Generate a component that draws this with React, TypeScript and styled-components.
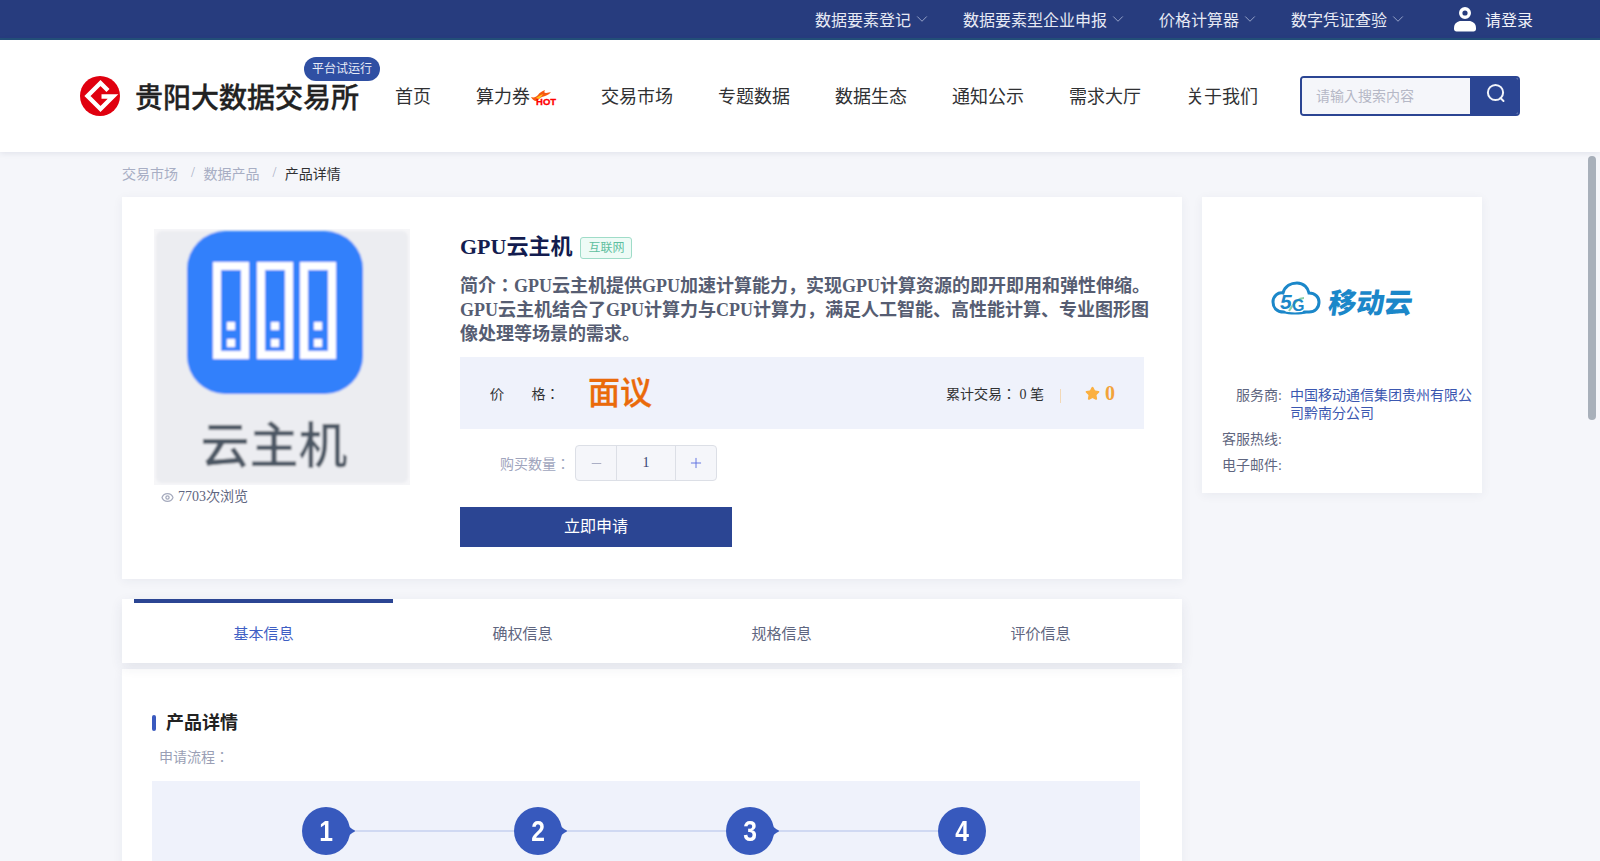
import React from "react";
import styled, { createGlobalStyle } from "styled-components";
import { ChevronDown, Eye, Star, Minus, Plus } from "lucide-react";

const FONT = `"Liberation Serif", "Noto Sans CJK JP", serif`;

const Global = createGlobalStyle`
  html, body, #root { margin: 0; padding: 0; height: 100%; overflow: hidden; }
  body { font-family: ${FONT}; color: #303133; }
  * { box-sizing: border-box; }
`;

const Page = styled.div`
  height: 861px;
  display: flex;
  flex-direction: column;
  background: #f5f6fa;
`;

const TopBar = styled.div`
  height: 40px;
  flex: none;
  background: #273c7e;
  border-bottom: 2px solid #24507a;
  display: flex;
  align-items: center;
  justify-content: flex-end;
  padding: 0 67px 1px 0;
  color: #e6e9f4;
  font-size: 16px;
`;

const TopItem = styled.div`
  display: flex;
  align-items: center;
  gap: 2px;
  margin-right: 32px;
  svg { color: #a3aed0; }
`;

const Login = styled.div`
  display: flex;
  align-items: center;
  gap: 8px;
  margin-left: 14px;
  color: #f0f2f9;
`;

const Header = styled.header`
  height: 112px;
  flex: none;
  background: #fff;
  display: flex;
  align-items: center;
  padding-left: 80px;
  box-shadow: 0 1px 6px rgba(30, 40, 90, 0.1);
  position: relative;
  z-index: 2;
`;

const Brand = styled.div`
  position: relative;
  display: flex;
  align-items: center;
  gap: 15px;
  margin-right: 36px;
`;

const BrandName = styled.div`
  font-size: 28px;
  font-weight: 500;
  -webkit-text-stroke: 0.3px #222;
  color: #222;
  white-space: nowrap;
`;

const TrialBadge = styled.span`
  position: absolute;
  left: 224px;
  top: -19px;
  width: 76px;
  height: 24px;
  border-radius: 12px;
  background: #2f4fa3;
  color: #e8ecf7;
  font-size: 12px;
  line-height: 24px;
  text-align: center;
`;

const Nav = styled.nav`
  display: flex;
  align-items: center;
  gap: 45px;
  margin-top: -3px;
  font-size: 18px;
  color: #303133;
`;

const NavItem = styled.span`
  display: flex;
  align-items: center;
  white-space: nowrap;
`;

const Hot = styled.span`
  position: relative;
  display: inline-block;
  width: 26px;
  height: 20px;
`;

const HotLabel = styled.span`
  position: absolute;
  left: 6px;
  top: 12px;
  font: 900 9.5px/9px "Liberation Sans", sans-serif;
  -webkit-text-stroke: 0.3px #f00;
  color: #f00;
`;

const FlameWrap = styled.svg`
  position: absolute;
  left: 1px;
  top: 5px;
`;

const Search = styled.div`
  width: 220px;
  height: 40px;
  margin-left: 42px;
  display: flex;
  border: 2px solid #2b4593;
  border-radius: 4px;
  overflow: hidden;
`;

const SearchInput = styled.input`
  flex: 1;
  min-width: 0;
  border: 0;
  outline: 0;
  padding: 1px 14px 0;
  background: #f5f6fa;
  font: 14px ${FONT};
  &::placeholder { color: #b5b8c6; opacity: 1; }
`;

const SearchButton = styled.div`
  width: 48px;
  flex: none;
  background: #2b4593;
  display: flex;
  justify-content: center;
  padding: 4px 0 0 3px;
`;

const ScrollFrame = styled.div`
  position: relative;
  flex: 1;
  min-height: 0;
`;

const Scroll = styled.main`
  height: 100%;
  overflow-y: scroll;
`;

const ScrollThumb = styled.div`
  position: absolute;
  top: 4px;
  right: 4px;
  width: 8px;
  height: 264px;
  border-radius: 4px;
  background: #a8b0ba;
`;

const Crumbs = styled.div`
  height: 41px;
  margin-bottom: 4px;
  padding-left: 122px;
  display: flex;
  align-items: center;
  font-size: 14px;
  color: #a8aec4;
`;

const CrumbSep = styled.span`
  margin: 0 8.5px 0 13px;
  color: #a8aec4;
`;

const CrumbNow = styled.span`
  color: #303133;
`;

const Columns = styled.div`
  display: grid;
  grid-template-columns: 1060px 280px;
  gap: 20px;
  padding-left: 122px;
  align-items: start;
`;

const LeftCol = styled.div`
  display: flex;
  flex-direction: column;
`;

const Card = styled.section`
  background: #fff;
  box-shadow: 0 2px 10px rgba(40, 50, 90, 0.06);
`;

const ProductCard = styled(Card)`
  height: 382px;
  padding: 32px;
  display: flex;
  gap: 50px;
`;

const Gallery = styled.div`
  width: 256px;
  flex: none;
`;

const Views = styled.div`
  display: flex;
  align-items: center;
  gap: 4px;
  padding-left: 7px;
  margin-top: 3px;
  font-size: 14px;
  line-height: 18px;
  color: #5f6680;
  svg { color: #a5aabd; }
`;

const Info = styled.div`
  width: 690px;
  flex: none;
`;

const TitleRow = styled.div`
  display: flex;
  align-items: center;
  gap: 8px;
  height: 30px;
`;

const Title = styled.h1`
  margin: 0;
  font-size: 22px;
  font-weight: 700;
  color: #131c4f;
`;

const Tag = styled.span`
  width: 52px;
  height: 22px;
  margin-top: 8px;
  border: 1px solid #9fdcc8;
  border-radius: 3px;
  background: #eefbf6;
  color: #5fbf9f;
  font-size: 12px;
  line-height: 20px;
  text-align: center;
`;

const Desc = styled.p`
  margin: 15px 0 0;
  font-size: 18px;
  font-weight: 700;
  line-height: 24px;
  color: #565d72;
`;

const PriceBox = styled.div`
  width: 684px;
  height: 72px;
  margin-top: 11px;
  background: #eff2fb;
  display: flex;
  align-items: center;
  padding: 0 29px 0 30px;
  font-size: 14px;
  color: #303133;
`;

const PriceLabel = styled.span`
  width: 98px;
  flex: none;
  word-spacing: 24px;
`;

const PriceValue = styled.span`
  font-size: 32px;
  font-weight: 500;
  margin-bottom: 6px;
  -webkit-text-stroke: 0.3px #ea6a0a;
  color: #ea6a0a;
  margin-right: auto;
`;

const Divider = styled.span`
  width: 1px;
  height: 14px;
  margin: 6px 24px 0 16px;
  background: #f2d8b6;
`;

const Score = styled.span`
  display: flex;
  align-items: center;
  gap: 5px;
  font-size: 20px;
  font-weight: 700;
  color: #f2a33a;
  svg { color: #fbb040; fill: #fbb040; }
`;

const QtyRow = styled.div`
  display: flex;
  align-items: center;
  margin-top: 16px;
  padding-left: 40px;
  gap: 5px;
  font-size: 14px;
  color: #a0a5bd;
`;

const Stepper = styled.div`
  width: 142px;
  height: 36px;
  display: flex;
  border: 1px solid #dcdfe6;
  border-radius: 4px;
  background: #f5f6fa;
`;

const StepBtn = styled.span<{ $accent?: boolean; $side: "l" | "r" }>`
  width: 41px;
  flex: none;
  display: flex;
  align-items: center;
  justify-content: center;
  color: ${(p) => (p.$accent ? "#5b6fe0" : "#a0a5bd")};
  ${(p) => (p.$side === "l" ? "border-right" : "border-left")}: 1px solid #dcdfe6;
`;

const StepValue = styled.span`
  flex: 1;
  text-align: center;
  line-height: 34px;
  color: #3a4470;
  font-size: 14px;
`;

const Apply = styled.button`
  display: block;
  width: 272px;
  height: 40px;
  margin-top: 26px;
  border: 0;
  padding: 0 0 4px;
  background: #2b4593;
  color: #fff;
  font: 16px ${FONT};
`;

const Tabs = styled(Card)`
  height: 64px;
  margin-top: 20px;
  padding: 0 12px;
  display: flex;
  position: relative;
  z-index: 1;
  box-shadow: 0 4px 12px rgba(40, 50, 90, 0.09);
`;

const Tab = styled.div<{ $active?: boolean }>`
  width: 259px;
  border-top: 4px solid ${(p) => (p.$active ? "#2b4593" : "transparent")};
  text-align: center;
  font-size: 15px;
  line-height: 62px;
  color: ${(p) => (p.$active ? "#3f5fc4" : "#5f6680")};
`;

const Detail = styled(Card)`
  margin-top: 6px;
  min-height: 1370px;
  padding: 42px 30px 0;
`;

const SectionTitle = styled.h2`
  margin: 0;
  font-size: 18px;
  font-weight: 700;
  line-height: 24px;
  color: #222;
  padding-left: 14px;
  position: relative;
  &::before {
    content: "";
    position: absolute;
    left: 0;
    top: 4px;
    width: 4px;
    height: 16px;
    border-radius: 2px;
    background: #3a5abf;
  }
`;

const FlowLabel = styled.div`
  margin-top: 14px;
  padding-left: 7px;
  font-size: 14px;
  line-height: 18px;
  color: #9a9fb5;
`;

const FlowBox = styled.div`
  width: 988px;
  height: 260px;
  margin-top: 14px;
  background: #eff2fb;
  padding: 26px 0 0 150px;
  display: flex;
  align-items: flex-start;
`;

const Step = styled.div<{ $last?: boolean }>`
  width: ${(p) => (p.$last ? "48px" : "212px")};
  flex: none;
  display: flex;
  align-items: center;
`;

const StepDot = styled.span`
  position: relative;
  width: 48px;
  height: 48px;
  flex: none;
  border-radius: 50%;
  background: #3759bd;
  color: #fff;
  font: 700 29px/48px "Liberation Sans", sans-serif;
  text-align: center;
`;

const StepDigit = styled.span`
  display: inline-block;
  transform: scaleX(0.85);
`;

const StepTip = styled.svg`
  position: absolute;
  left: 44px;
  top: 13px;
`;

const StepLine = styled.span`
  flex: 1;
  height: 2px;
  background: #d0d9f2;
`;

const Side = styled(Card)`
  padding-bottom: 18px;
`;

const SideLogo = styled.div`
  height: 190px;
  padding-top: 12px;
  display: flex;
  align-items: center;
  justify-content: center;
  gap: 8px;
`;

const SideLogoText = styled.span`
  font: 900 28px/32px "Noto Sans CJK SC", sans-serif;
  color: #1b87c9;
  transform: skewX(-8deg);
  margin-top: 6px;
`;

const SideRows = styled.dl`
  margin: 0;
  display: grid;
  grid-template-columns: 80px 1fr;
  column-gap: 8px;
  row-gap: 8px;
  padding-right: 8px;
  font-size: 14px;
  line-height: 18px;
`;

const SideKey = styled.dt`
  text-align: right;
  color: #5f6680;
`;

const SideVal = styled.dd`
  margin: 0;
  min-height: 18px;
  color: #3b57b0;
`;

const Logo = () => (
  <svg width="40" height="40" viewBox="0 0 40 40">
    <circle cx="20" cy="20" r="20" fill="#e0000f" />
    <path d="M28 14.5 L20.5 7 L7.5 20 L20.5 33 L33 20.5 H21.5" fill="none" stroke="#fff" strokeWidth="4.4" />
  </svg>
);

const Flame = () => (
  <FlameWrap width="20" height="12" viewBox="0 0 20 12">
    <path d="M0 7 C3 8 5 7 7 5 C8 3 11 1 14 0 C13 2 13 3 15 3 C17 3 19 2 20 2 C18 5 14 6 11 7 C8 8 7 11 5 11 C3 11 1 9 0 7 Z" fill="#f7590f" />
    <path d="M5 8 C7 7 9 5 12 4 C11 6 9 8 7 9 Z" fill="#ffc21a" />
  </FlameWrap>
);

const UserIcon = () => (
  <svg width="24" height="26" viewBox="0 0 24 26">
    <circle cx="12" cy="7" r="4.3" fill="none" stroke="#fff" strokeWidth="3.4" />
    <path d="M1 22 C1 17 5 15 8 15 H16 C19 15 23 17 23 22 V23 C23 24.5 22 25.5 20.5 25.5 H3.5 C2 25.5 1 24.5 1 23 Z" fill="#fff" />
  </svg>
);

const SearchIcon = () => (
  <svg width="22" height="22" viewBox="0 0 22 22" fill="none" stroke="#f2f4fa" strokeWidth="2">
    <circle cx="10.5" cy="10.5" r="7.6" />
    <path d="M15.5 16 L18.5 19" strokeLinecap="round" />
  </svg>
);

const ProductImage = () => (
  <svg width="256" height="256" viewBox="0 0 256 256" style={{ display: "block" }}>
    <defs>
      <filter id="soft" x="-5%" y="-5%" width="110%" height="110%">
        <feGaussianBlur stdDeviation="0.9" />
      </filter>
    </defs>
    <rect width="256" height="256" fill="#f6f6f8" />
    <g filter="url(#soft)">
      <rect x="2" y="2" width="252" height="252" rx="6" fill="#ecedf1" />
      <rect x="33" y="2" width="176" height="163" rx="38" fill="#3280fb" />
      {[59, 103, 146].map((x) => (
        <g key={x}>
          <rect x={x + 4} y="37" width="28" height="89" fill="none" stroke="#fff" strokeWidth="8" />
          <rect x={x + 14} y="93" width="8" height="8" fill="#fff" />
          <rect x={x + 14} y="110" width="8" height="8" fill="#fff" />
        </g>
      ))}
      <text x="120" y="234" textAnchor="middle" fontSize="49" fontWeight="500" fontFamily="Noto Sans CJK SC, sans-serif" fill="#4c5663">云主机</text>
    </g>
  </svg>
);

const CloudLogo = () => (
  <svg width="50" height="34" viewBox="0 0 50 34">
    <path d="M13 31 C5 31 2 26 2 21 C2 15 7 11 12 12 C14 5 20 2 26 2 C33 2 37 7 38 12 C44 12 48 16 48 21 C48 27 44 31 38 31 H33" fill="none" stroke="#1b87c9" strokeWidth="3" strokeLinecap="round" />
    <path d="M13 31 C18 33 30 33 35 31" fill="none" stroke="#1b87c9" strokeWidth="2" />
    <path d="M18 30 C24 20 28 17 33 17" fill="none" stroke="#8ccfa6" strokeWidth="2" />
    <text x="9" y="28" fontSize="21" fontWeight="700" fontStyle="italic" fontFamily="Liberation Sans, sans-serif" fill="#1b87c9">5</text>
    <text x="21" y="30" fontSize="16" fontWeight="700" fontFamily="Liberation Sans, sans-serif" fill="#1b87c9">G</text>
  </svg>
);

const topItems = ["数据要素登记", "数据要素型企业申报", "价格计算器", "数字凭证查验"];
const navItems = ["交易市场", "专题数据", "数据生态", "通知公示", "需求大厅", "关于我们"];
const tabs = ["基本信息", "确权信息", "规格信息", "评价信息"];

export default function App() {
  return (
    <Page>
      <Global />
      <TopBar>
        {topItems.map((t) => (
          <TopItem key={t}>
            {t}
            <ChevronDown size={18} strokeWidth={1.2} />
          </TopItem>
        ))}
        <Login>
          <UserIcon />
          请登录
        </Login>
      </TopBar>
      <Header>
        <Brand>
          <Logo />
          <BrandName>贵阳大数据交易所</BrandName>
          <TrialBadge>平台试运行</TrialBadge>
        </Brand>
        <Nav>
          <NavItem>首页</NavItem>
          <NavItem>
            算力券
            <Hot>
              <Flame />
              <HotLabel>HOT</HotLabel>
            </Hot>
          </NavItem>
          {navItems.map((n) => (
            <NavItem key={n}>{n}</NavItem>
          ))}
        </Nav>
        <Search>
          <SearchInput placeholder="请输入搜索内容" />
          <SearchButton>
            <SearchIcon />
          </SearchButton>
        </Search>
      </Header>
      <ScrollFrame>
        <Scroll>
          <Crumbs>
            交易市场
            <CrumbSep>/</CrumbSep>
            数据产品
            <CrumbSep>/</CrumbSep>
            <CrumbNow>产品详情</CrumbNow>
          </Crumbs>
          <Columns>
            <LeftCol>
              <ProductCard>
                <Gallery>
                  <ProductImage />
                  <Views>
                    <Eye size={13} strokeWidth={2.4} />
                    7703次浏览
                  </Views>
                </Gallery>
                <Info>
                  <TitleRow>
                    <Title>GPU云主机</Title>
                    <Tag>互联网</Tag>
                  </TitleRow>
                  <Desc>简介：GPU云主机提供GPU加速计算能力，实现GPU计算资源的即开即用和弹性伸缩。GPU云主机结合了GPU计算力与CPU计算力，满足人工智能、高性能计算、专业图形图像处理等场景的需求。</Desc>
                  <PriceBox>
                    <PriceLabel>价 格：</PriceLabel>
                    <PriceValue>面议</PriceValue>
                    <span>累计交易： 0 笔</span>
                    <Divider />
                    <Score>
                      <Star size={15} />0
                    </Score>
                  </PriceBox>
                  <QtyRow>
                    购买数量：
                    <Stepper>
                      <StepBtn $side="l">
                        <Minus size={15} strokeWidth={1.4} />
                      </StepBtn>
                      <StepValue>1</StepValue>
                      <StepBtn $side="r" $accent>
                        <Plus size={16} strokeWidth={1.4} />
                      </StepBtn>
                    </Stepper>
                  </QtyRow>
                  <Apply>立即申请</Apply>
                </Info>
              </ProductCard>
              <Tabs>
                {tabs.map((t, i) => (
                  <Tab key={t} $active={i === 0}>
                    {t}
                  </Tab>
                ))}
              </Tabs>
              <Detail>
                <SectionTitle>产品详情</SectionTitle>
                <FlowLabel>申请流程：</FlowLabel>
                <FlowBox>
                  {[1, 2, 3, 4].map((n) => (
                    <Step key={n} $last={n === 4}>
                      <StepDot>
                        <StepDigit>{n}</StepDigit>
                        {n < 4 && (
                          <StepTip width="10" height="22" viewBox="0 0 10 22">
                            <path d="M0 0 C1 5 4 8 8 10 Q10 11 8 12 C4 14 1 17 0 22 Z" fill="#3759bd" />
                          </StepTip>
                        )}
                      </StepDot>
                      {n < 4 && <StepLine />}
                    </Step>
                  ))}
                </FlowBox>
              </Detail>
            </LeftCol>
            <Side>
              <SideLogo>
                <CloudLogo />
                <SideLogoText>移动云</SideLogoText>
              </SideLogo>
              <SideRows>
                <SideKey>服务商:</SideKey>
                <SideVal>中国移动通信集团贵州有限公司黔南分公司</SideVal>
                <SideKey>客服热线:</SideKey>
                <SideVal />
                <SideKey>电子邮件:</SideKey>
                <SideVal />
              </SideRows>
            </Side>
          </Columns>
        </Scroll>
        <ScrollThumb />
      </ScrollFrame>
    </Page>
  );
}
